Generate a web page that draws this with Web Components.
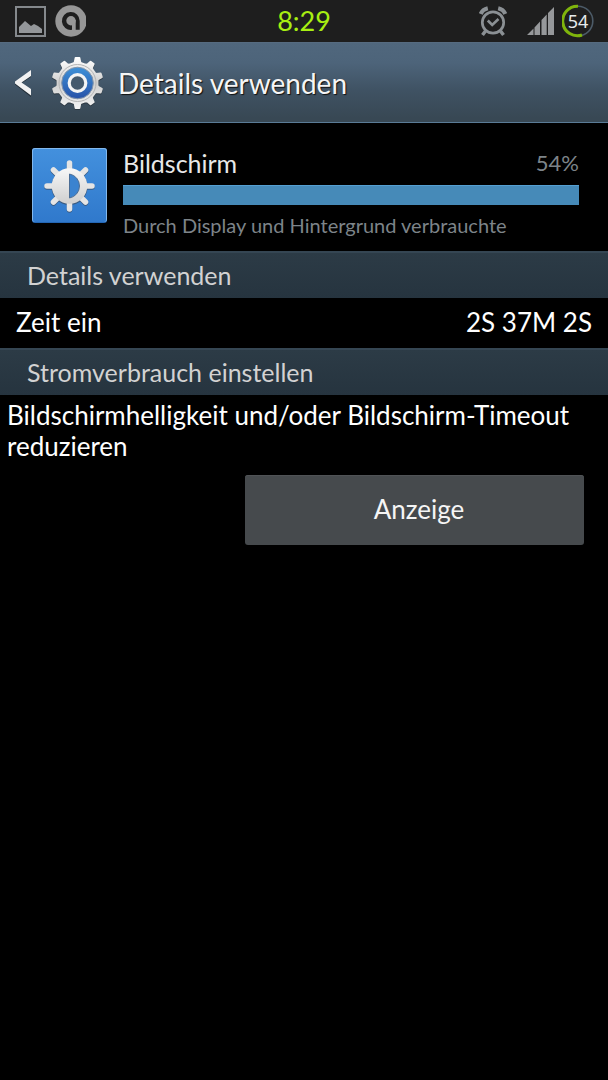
<!DOCTYPE html>
<html lang="de">
<head>
<meta charset="utf-8">
<meta name="viewport" content="width=device-width, initial-scale=1">
<title>Details verwenden</title>
<style>
  body { margin: 0; background: #000; color: #fff; font-family: Lato, "Open Sans", sans-serif; font-size: 26px; line-height: 31px; }
</style>
</head>
<body>
<status-bar time="8:29" battery="54"></status-bar>
<title-bar>Details verwenden</title-bar>
<main>
  <usage-summary value="100">
    <span slot="name">Bildschirm</span>
    <span slot="percent">54%</span>
    <span slot="note">Durch Display und Hintergrund verbrauchte</span>
  </usage-summary>
  <section-header>Details verwenden</section-header>
  <detail-row><span slot="label">Zeit ein</span><span slot="value">2S 37M 2S</span></detail-row>
  <section-header>Stromverbrauch einstellen</section-header>
  <power-action>Bildschirmhelligkeit und/oder Bildschirm-Timeout reduzieren<span slot="action">Anzeige</span></power-action>
</main>

<script>
const define = (name, render) => customElements.define(name, class extends HTMLElement {
  constructor() {
    super();
    this.attachShadow({ mode: 'open' });
  }
  connectedCallback() {
    this.shadowRoot.innerHTML = render(this);
  }
});

// Outline of a cog with n flat-topped teeth
const cog = (n, cx, cy, outer, inner) => {
  const pts = [];
  const step = Math.PI * 2 / n;
  for (let i = 0; i < n; i++) {
    const a = i * step - Math.PI / 2;
    for (const [off, r] of [[-0.36, inner], [-0.22, inner + 0.6], [-0.12, outer], [0.12, outer], [0.22, inner + 0.6], [0.36, inner]]) {
      pts.push((cx + r * Math.cos(a + off * step)).toFixed(2) + ' ' + (cy + r * Math.sin(a + off * step)).toFixed(2));
    }
  }
  return 'M' + pts.join('L') + 'Z';
};

define('status-bar', el => `
  <style>
    :host { display: grid; grid-template-columns: 1fr auto 1fr; align-items: center; height: 42px; padding: 0 14px; background: #1e1e1e; }
    .left, .right { display: flex; align-items: center; }
    .left { gap: 8px; }
    .right { justify-content: flex-end; }
    svg { display: block; }
    .signal { margin: 0 8px 0 20px; }
    time { color: #a8ef12; font-size: 27px; line-height: 42px; }
    .battery { display: grid; place-items: center; width: 32px; height: 34px; }
    .battery > * { grid-area: 1 / 1; }
    .battery span { color: #e6eaec; font: 18px/20px "Noto Sans", sans-serif; }
  </style>
  <div class="left">
    <svg width="32" height="32" viewBox="0 0 32 32" aria-hidden="true">
      <rect x="2" y="2" width="29" height="29" fill="none" stroke="#85898d" stroke-width="2"/>
      <path d="M5 28V22L11 16L17 21L20 19L24 21L28 24V28Z" fill="#94979a"/>
    </svg>
    <svg width="32" height="32" viewBox="0 0 32 32" aria-hidden="true">
      <circle cx="17" cy="16" r="15.7" fill="#979797"/>
      <path d="M18 24.8A8.9 8.9 0 1 1 25.7 16V24.8H18Z" fill="#1e1e1e"/>
      <circle cx="17" cy="15.8" r="4.7" fill="#979797"/>
      <path d="M18 15H21.7V25L18 27Z" fill="#979797"/>
    </svg>
  </div>
  <time>${el.getAttribute('time')}</time>
  <div class="right">
    <svg width="28" height="32" viewBox="0 0 28 32" fill="none" stroke="#8b9094" aria-hidden="true">
      <circle cx="14" cy="17.500" r="10.700" stroke-width="2.700"/>
      <path d="M8.800 15.500L13.200 20L19.500 14" stroke-width="2.600"/>
      <path d="M1.800 9Q3.500 4.500 8.800 3.300M26.200 9Q24.500 4.500 19.200 3.300" stroke-width="4.200"/>
      <path d="M6.500 26L3.500 30M21.500 26L24.500 30" stroke-width="3.500"/>
    </svg>
    <svg class="signal" width="27" height="28" viewBox="0 0 27 28" fill="#96989a" aria-hidden="true">
      <path d="M0 28L6.500 21.500V28ZM7.500 28V20.500L13 14.500V28ZM14.500 28V13L19.700 7.500V28ZM21 28V6L27 0V28Z"/>
    </svg>
    <div class="battery">
      <svg width="32" height="34" viewBox="0 0 32 34" fill="none" aria-hidden="true">
        <circle cx="16" cy="17" r="14.8" stroke="#4c5b68" stroke-width="1.6"/>
        <path d="M16 2.2A14.6 14.8 0 1 0 20 31" stroke="#7fb50c" stroke-width="3"/>
      </svg>
      <span>${el.getAttribute('battery')}</span>
    </div>
  </div>
`);

define('title-bar', () => `
  <style>
    :host { display: block; background: linear-gradient(#50677d, #4d647a 25%, #3f5263 60%, #384854 95%); border-top: 1px solid #566b80; border-bottom: 1px solid #5a7b96; }
    header { display: flex; align-items: center; height: 79px; padding: 0 14px; }
    a { display: flex; align-items: center; gap: 20px; margin-right: 14px; }
    svg { display: block; overflow: visible; }
    h1 { margin: 0; color: #f5f5f5; font-size: 28px; line-height: 34px; font-weight: 400; text-shadow: 1px 1px 1px #111; }
  </style>
  <header>
    <a href="#" aria-label="Zurück">
      <svg width="17" height="28" viewBox="0 0 17 28">
        <path d="M17 1V7L7 13.5L17 20V27L1 14.5V12.5Z" fill="#222d36" transform="translate(0 1)"/>
        <path d="M17 1V7L7.500 13.500L17 20V26.500L1 14.500V12.500Z" fill="#f2f2f2"/>
      </svg>
      <svg width="53" height="54" viewBox="0 0 53 54">
        <defs>
          <linearGradient id="m" x2="0" y2="1"><stop stop-color="#fff"/><stop offset=".5" stop-color="#cfcfcf"/><stop offset="1" stop-color="#f2f2f2"/></linearGradient>
          <linearGradient id="b" x2="0" y2="1"><stop stop-color="#3e91d8"/><stop offset="1" stop-color="#2852a8"/></linearGradient>
        </defs>
        <path d="${cog(10, 26.5, 27, 25, 20)}" fill="#2c3740" stroke="#2c3740" stroke-width="2" stroke-linejoin="round" transform="translate(0 1)"/>
        <path d="${cog(10, 26.5, 27, 25, 20)}" fill="url(#m)" stroke="url(#m)" stroke-width="2" stroke-linejoin="round"/>
        <circle cx="26.5" cy="27" r="18.5" fill="none" stroke="#b4b4b4"/>
        <circle cx="26.5" cy="27" r="15.8" fill="url(#b)" stroke="#8294aa"/>
        <circle cx="26.5" cy="27" r="8.3" fill="#455a6d" stroke="#f4f4f4" stroke-width="3.2"/>
      </svg>
    </a>
    <h1><slot></slot></h1>
  </header>
`);

define('usage-summary', el => `
  <style>
    :host { display: flex; align-items: flex-start; gap: 16px; padding: 25px 29px 11px 32px; }
    svg { display: block; flex: none; }
    .info { flex: 1; min-width: 0; }
    .top { display: flex; justify-content: space-between; align-items: center; height: 30px; color: #e8e8e8; }
    .name { font-size: 25px; }
    .percent, .note { color: #7d8489; line-height: 30px; }
    .note { font-size: 20px; }
    .percent { font-size: 22px; }
    .bar { height: 20px; margin: 7px 0 5px; }
    .fill { height: 100%; width: ${el.getAttribute('value')}%; background: #468ab8; box-shadow: inset 0 1px #55a0d2; }
  </style>
  <svg width="75" height="75" viewBox="0 0 75 75" aria-hidden="true">
    <defs>
      <linearGradient id="t" x2="0" y2="1"><stop stop-color="#4390dd"/><stop offset="1" stop-color="#3079cc"/></linearGradient>
      <linearGradient id="w" x2="0" y2="1"><stop stop-color="#f7f7f7"/><stop offset="1" stop-color="#cfcfcf"/></linearGradient>
    </defs>
    <rect width="75" height="75" rx="3" fill="#2466b4"/>
    <rect width="75" height="74" rx="3" fill="#82b8ed"/>
    <rect x="1" y="1" width="73" height="73" rx="2" fill="url(#t)"/>
    <g transform="translate(0 1)" stroke="#3b5c82" fill="#3b5c82">
      <circle cx="37.500" cy="38" r="18" stroke="none"/>
      <path d="M37.500 15V61M15 38H60M21.500 22L53.500 54M53.500 22L21.500 54" stroke-width="5.500" stroke-linecap="round"/>
    </g>
    <path d="M37.500 15V61M15 38H60M21.500 22L53.500 54M53.500 22L21.500 54" stroke="#e5e5e5" stroke-width="5.500" stroke-linecap="round"/>
    <circle cx="37.500" cy="38" r="17.800" fill="url(#w)"/>
    <path d="M37.500 26A12.200 12.200 0 0 1 37.500 50Z" fill="#3b83d0" stroke="#4b6d95"/>
  </svg>
  <div class="info">
    <div class="top"><span class="name"><slot name="name"></slot></span><span class="percent"><slot name="percent"></slot></span></div>
    <div class="bar"><div class="fill"></div></div>
    <div class="note"><slot name="note"></slot></div>
  </div>
`);

define('section-header', () => `
  <style>
    :host { display: block; background: linear-gradient(#2c3b46, #26343f); border-top: 2px solid #354653; }
    h2 { margin: 0; padding: 0 27px; color: #d2d2d2; font-size: 25px; line-height: 45px; font-weight: 400; }
  </style>
  <h2><slot></slot></h2>
`);

define('detail-row', () => `
  <style>
    :host { display: flex; justify-content: space-between; align-items: center; height: 48px; padding: 0 16px 2px; }
  </style>
  <slot name="label"></slot><slot name="value"></slot>
`);

define('power-action', () => `
  <style>
    :host { display: block; }
    p { margin: 0; padding: 5px 7px 13px; }
    .actions { display: grid; grid-template-columns: 2fr 3fr; padding: 0 24px 0 19px; }
    button { grid-column: 2; height: 70px; padding: 0 0 2px 9px; border: 0; border-radius: 3px; background: #464a4d; box-shadow: inset 0 1px #505356; color: #f5f5f5; font: inherit; }
  </style>
  <p><slot></slot></p>
  <div class="actions"><button type="button"><slot name="action"></slot></button></div>
`);
</script>
</body>
</html>
